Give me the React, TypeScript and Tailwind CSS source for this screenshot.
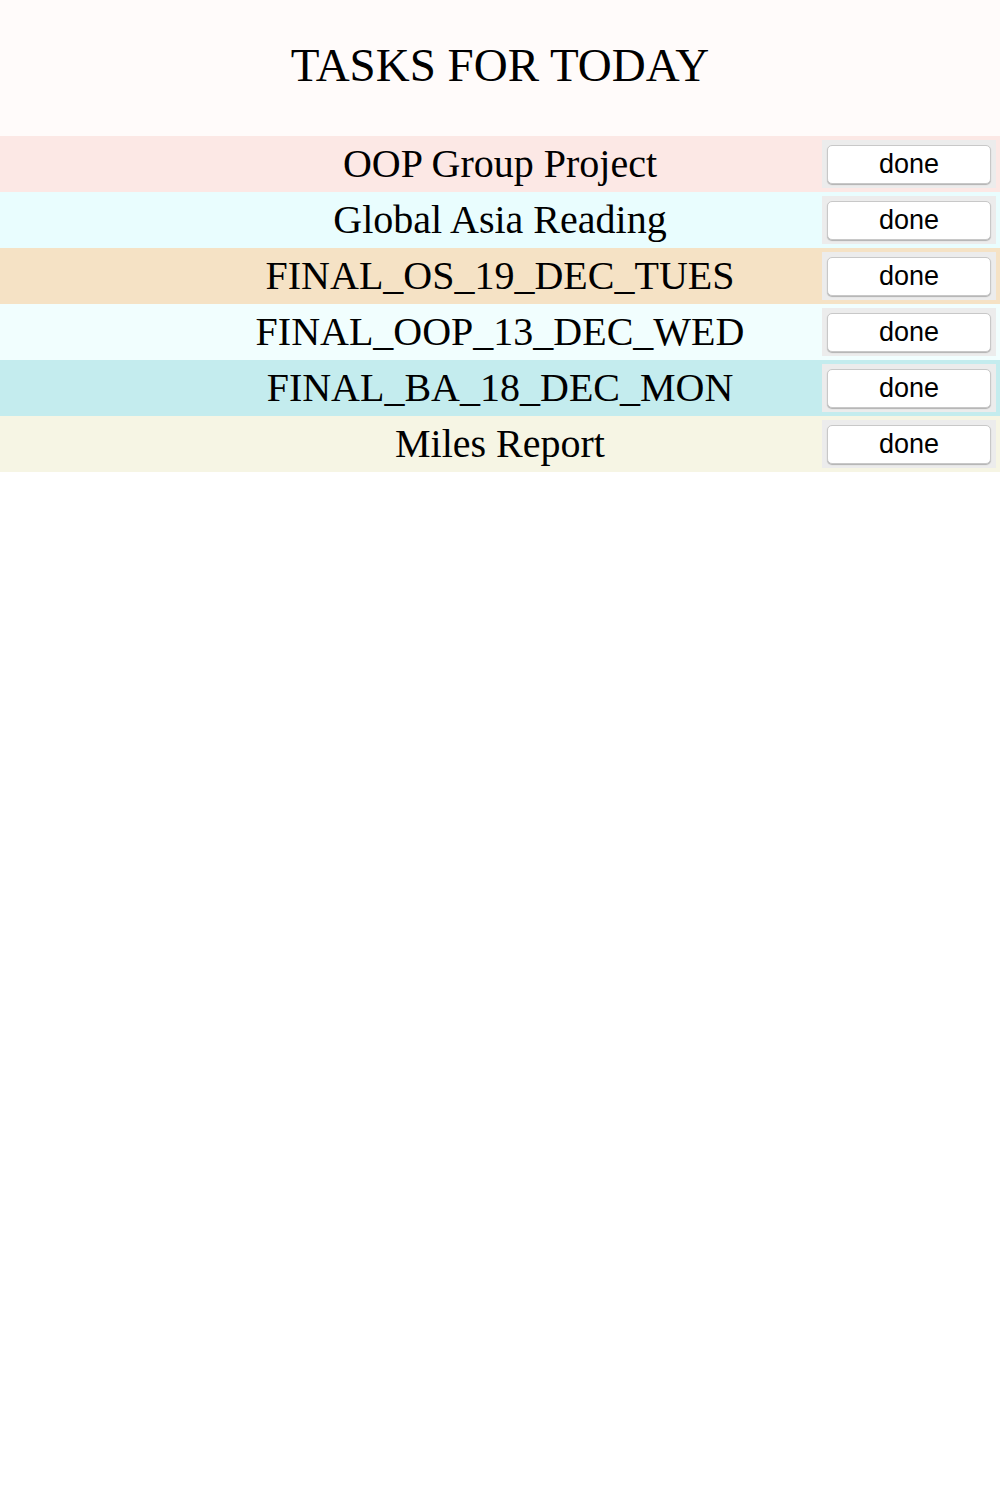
const tasks = [
  { title: 'OOP Group Project', bg: 'bg-[#fce8e5]' },
  { title: 'Global Asia Reading', bg: 'bg-[#e9fdfe]' },
  { title: 'FINAL_OS_19_DEC_TUES', bg: 'bg-[#f5e2c5]' },
  { title: 'FINAL_OOP_13_DEC_WED', bg: 'bg-[#f1fefe]' },
  { title: 'FINAL_BA_18_DEC_MON', bg: 'bg-[#c4ecee]' },
  { title: 'Miles Report', bg: 'bg-[#f6f5e4]' },
]

function TaskRow({ title, bg }: { title: string; bg: string }) {
  return (
    <div className={`grid h-14 grid-cols-[178px_1fr_178px] items-center ${bg}`}>
      <div />
      <p className="whitespace-nowrap text-center text-[40px] leading-none text-black">{title}</p>
      <div className="flex justify-start">
        <div className="flex h-12 w-[174px] items-center justify-center bg-[#ececec]">
          <button
            type="button"
            className="h-[39px] w-[164px] rounded-[5px] border border-[#c8c8c8] bg-white font-['Liberation_Sans',Arial,sans-serif] text-[27px] leading-none text-black shadow-[0_1px_1px_rgba(0,0,0,0.25)]"
          >
            done
          </button>
        </div>
      </div>
    </div>
  )
}

export default function App() {
  return (
    <div className="min-h-[1488px] bg-white font-['Liberation_Serif','Times_New_Roman',serif]">
      <header className="flex h-[136px] items-center justify-center bg-[#fffbfa] pb-1.5">
        <h1 className="text-[47px] leading-none text-black">TASKS FOR TODAY</h1>
      </header>
      {tasks.map((task) => (
        <TaskRow key={task.title} title={task.title} bg={task.bg} />
      ))}
    </div>
  )
}
